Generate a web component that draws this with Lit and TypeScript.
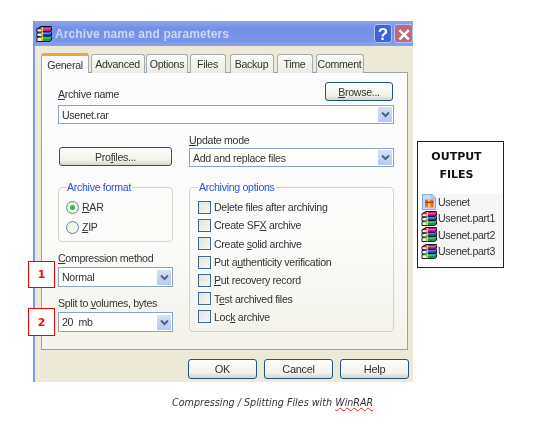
import { LitElement, html, css, svg } from "lit";
import { customElement } from "lit/decorators.js";

// stack of three books, used for the title bar and the volume list
const rarIcon = svg`
  <path d="M1 3 5 .5h10.5v4l-2 1.5H1z" fill="#c4177f" stroke="#111"/>
  <path d="M6 2.8h7.5l2-1.5" fill="none" stroke="#f070b8"/>
  <path d="M1 7 4 5.5h11.5v4l-2 1H1z" fill="#1f3fc4" stroke="#111"/>
  <path d="M6 7.3h7.5l2-1.5" fill="none" stroke="#6fa8f0"/>
  <path d="M1 11.5 4 10h11.5v4l-2 1.5H1z" fill="#0f9a55" stroke="#111"/>
  <path d="M6 12h7.5l2-1.5" fill="none" stroke="#60d898"/>
  <path d="M1.5 3.5h4v2h-4zM1.5 7.5h4v2.5h-4zM1.5 12h4v3h-4z" fill="#f4f0dc"/>
  <path d="M5.5 1h1.6v4.5H5.5zM5.5 5.8h1.6v4.4H5.5zM5.5 10.5h1.6v4.6H5.5z" fill="#e8c838"/>
`;

const sfxIcon = svg`
  <path d="M1.5 .5h9.5l3.5 3.5v11.5h-13z" fill="#c8dcf6" stroke="#88a8d8"/>
  <path d="M11 .5V4h3.5z" fill="#fff" stroke="#88a8d8"/>
  <rect x="4" y="5.5" width="8.5" height="8" fill="#e8742a"/>
  <rect x="7" y="5.5" width="2.4" height="8" fill="#f8d860"/>
  <rect x="4" y="7.5" width="8.5" height="1.6" fill="#c83020"/>
`;

const chevron = html`<span class="arrow"><svg width="9" height="7" viewBox="0 0 9 7"><path d="M1 1.5 4.5 5 8 1.5" fill="none" stroke="#4d6185" stroke-width="2"/></svg></span>`;

@customElement("app-root")
export class AppRoot extends LitElement {
  static styles = css`
    :host {
      display: block;
      width: 559px;
      height: 429px;
      overflow: hidden;
      background: #fff;
      font-family: "Liberation Sans", sans-serif;
      font-size: 10.6px;
      letter-spacing: -0.3px;
      color: #333;
    }
    * { box-sizing: border-box; }
    u { text-underline-offset: 1px; }

    .page {
      display: grid;
      grid-template-columns: 380px 87px;
      column-gap: 4px;
      padding: 21px 0 0 33px;
      filter: blur(0.35px);
    }

    .dialog {
      position: relative;
      height: 361px;
      background: #ece9d8;
      border-left: 2px solid #7f9ae6;
    }
    .titlebar {
      height: 25px;
      display: flex;
      align-items: center;
      gap: 3px;
      padding-left: 1px;
      background: linear-gradient(#8ba6ea, #7391e6 30%, #7b97e8 80%, #8ba3ea);
    }
    .titlebar svg { flex: none; }
    .title {
      flex: 1;
      font-weight: 700;
      font-size: 12px;
      letter-spacing: 0.1px;
      color: #c9d6f6;
    }
    .winbtn {
      width: 18px;
      height: 19px;
      border: 1px solid #b4c4f2;
      border-radius: 3px;
      display: grid;
      place-items: center;
      font-weight: 700;
      font-size: 17px;
      letter-spacing: 0;
      color: #fff;
    }
    .help { background: #3f62d8; }
    .close { background: #bc6a80; margin-left: -1px; width: 19px; }

    .body { padding: 7px 5px 0 6px; }
    .tabs {
      display: flex;
      height: 20px;
      position: relative;
      z-index: 1;
    }
    .tab {
      height: 19px;
      margin-top: 1px;
      border: 1px solid #a3acaf;
      border-bottom: 0;
      border-radius: 3px 3px 0 0;
      background: linear-gradient(#fbfbf8, #ecebe4);
      display: grid;
      place-items: center;
      color: #333;
    }
    .tab.active {
      height: 20px;
      margin-top: 0;
      border: 1px solid #a3acaf;
      border-top: 3px solid #f0a63c;
      border-bottom: 0;
      background: #fbfbfd;
    }
    .panel {
      height: 278px;
      margin-top: -1px;
      padding: 9px 13px 0 16px;
      border: 1px solid #98a3a8;
      background: linear-gradient(#fcfcfe, #fbfbfa 60%, #f3f2ea);
    }

    .name-head {
      display: flex;
      justify-content: space-between;
      align-items: flex-end;
      height: 19px;
    }
    .name-head label { line-height: 13px; }
    .btn {
      display: grid;
      place-items: center;
      height: 19px;
      border: 1px solid #1f5585;
      border-radius: 3px;
      background: linear-gradient(#fdfdfb, #f3f2ec 70%, #d8d4c8);
      color: #333;
    }
    .browse { width: 68px; margin-right: 1px; }
    .profiles { width: 113px; margin: 13px 0 0 1px; }

    .field {
      display: flex;
      align-items: center;
      justify-content: space-between;
      height: 19px;
      border: 1px solid #8aa5c0;
      background: #fff;
      padding: 0 1px 0 3px;
      color: #333;
    }
    .arrow {
      display: grid;
      place-items: center;
      width: 14px;
      height: 15px;
      background: linear-gradient(#d3e0f8, #b6c9f2);
    }
    .name-field { margin-top: 4px; }

    .columns {
      display: grid;
      grid-template-columns: 115px 205px;
      column-gap: 16px;
      margin-top: 10px;
    }
    .caption-label {
      display: block;
      line-height: 12px;
      height: 12px;
    }
    .update-label { margin-bottom: 2px; }
    .left { position: relative; }

    fieldset {
      margin: 0;
      min-width: 0;
      border: 1px solid #d6d3c6;
      border-radius: 4px;
      padding: 0;
    }
    legend {
      padding: 0 1px;
      line-height: 12px;
      color: #2552e6;
    }
    .format { margin-top: 15px; height: 61px; padding: 4px 0 0 7px; }
    .choice {
      display: flex;
      align-items: center;
      gap: 3px;
      height: 20px;
    }
    .radio {
      width: 13px;
      height: 13px;
      border: 1.5px solid #5d83a8;
      border-radius: 50%;
      background: #f4f4ee;
      display: grid;
      place-items: center;
    }
    .radio i {
      width: 5px;
      height: 5px;
      border-radius: 50%;
      background: #2ec23c;
    }
    .options { margin-top: 14px; height: 151px; padding: 5px 0 0 8px; }
    .option {
      display: flex;
      align-items: center;
      gap: 3px;
      height: 18.3px;
    }
    .check {
      width: 13px;
      height: 13px;
      border: 1px solid #3f6a90;
      background: linear-gradient(135deg, #e4e3da, #f8f8f4);
    }

    .compression { margin-top: 10px; }
    .combo { height: 20px; margin-top: 3px; }
    .split { margin-top: 10px; }

    .badge {
      position: absolute;
      left: -30px;
      width: 27px;
      height: 27px;
      border: 1.5px solid #f00000;
      background: #fff;
      display: grid;
      place-items: center;
      font-family: "DejaVu Sans", sans-serif;
      font-weight: 700;
      font-size: 11px;
      letter-spacing: 0;
      color: #f01010;
    }
    .badge-1 { top: 127px; }
    .badge-2 { top: 174px; height: 28px; }

    .actions {
      display: flex;
      justify-content: flex-end;
      gap: 7px;
      margin: 9px -1px 0 0;
    }
    .actions .btn { width: 69px; height: 20px; font-size: 11px; }

    .output {
      width: 87px;
      height: 127px;
      margin-top: 120px;
      border: 1px solid #222;
      padding: 6px 1px 0 3px;
    }
    .output h2 {
      margin: 0 0 10px;
      padding-right: 10px;
      font-family: "DejaVu Sans", sans-serif;
      font-weight: 700;
      font-size: 11px;
      letter-spacing: 0;
      line-height: 18px;
      text-align: center;
      color: #111;
    }
    .files { background: #f6f6f6; padding-bottom: 1px; }
    .file {
      display: flex;
      align-items: center;
      height: 16.3px;
      color: #333;
    }
    .file svg { flex: none; margin-right: 1px; }

    .caption {
      grid-column: 1 / -1;
      margin-top: 14px;
      padding-left: 139px;
      font-family: "DejaVu Sans", sans-serif;
      font-style: italic;
      font-size: 9.6px;
      letter-spacing: 0;
      line-height: 14px;
      color: #333;
    }
    .spell { text-decoration: underline wavy #e02020 0.7px; }
  `;

  tabs: [string, number, boolean?][] = [
    ["General", 48, true],
    ["Advanced", 54],
    ["Options", 42],
    ["Files", 36],
    ["Backup", 44],
    ["Time", 36],
    ["Comment", 48],
  ];

  options = [
    html`De<u>l</u>ete files after archiving`,
    html`Create SF<u>X</u> archive`,
    html`Create <u>s</u>olid archive`,
    html`Put a<u>u</u>thenticity verification`,
    html`<u>P</u>ut recovery record`,
    html`T<u>e</u>st archived files`,
    html`Loc<u>k</u> archive`,
  ];

  render() {
    return html`
      <div class="page">
        <section class="dialog">
          <header class="titlebar">
            <svg width="16" height="16" viewBox="0 0 16 16">${rarIcon}</svg>
            <span class="title">Archive name and parameters</span>
            <span class="winbtn help">?</span>
            <span class="winbtn close">✕</span>
          </header>
          <div class="body">
            <nav class="tabs">
              ${this.tabs.map(
                ([name, w, active], i) => html`<span
                  class="tab ${active ? "active" : ""}"
                  style="width:${w}px;margin-left:${i === 0 ? 0 : i === 4 ? 4 : i > 4 ? 3 : 1.5}px"
                  >${name}</span
                >`
              )}
            </nav>
            <div class="panel">
              <div class="name-head">
                <label><u>A</u>rchive name</label>
                <span class="btn browse"><span><u>B</u>rowse...</span></span>
              </div>
              <div class="field name-field">Usenet.rar ${chevron}</div>
              <div class="columns">
                <div class="left">
                  <span class="btn profiles"><span>Pro<u>f</u>iles...</span></span>
                  <fieldset class="format">
                    <legend>Archive format</legend>
                    <div class="choice"><span class="radio"><i></i></span><span><u>R</u>AR</span></div>
                    <div class="choice"><span class="radio"></span><span><u>Z</u>IP</span></div>
                  </fieldset>
                  <label class="caption-label compression"><u>C</u>ompression method</label>
                  <div class="field combo">Normal ${chevron}</div>
                  <label class="caption-label split">Split to <u>v</u>olumes, bytes</label>
                  <div class="field combo">20 &nbsp;mb ${chevron}</div>
                  <span class="badge badge-1">1</span>
                  <span class="badge badge-2">2</span>
                </div>
                <div>
                  <label class="caption-label update-label"><u>U</u>pdate mode</label>
                  <div class="field">Add and replace files ${chevron}</div>
                  <fieldset class="options">
                    <legend>Archiving options</legend>
                    ${this.options.map(
                      (o) => html`<div class="option"><span class="check"></span><span>${o}</span></div>`
                    )}
                  </fieldset>
                </div>
              </div>
            </div>
            <div class="actions">
              <span class="btn">OK</span>
              <span class="btn">Cancel</span>
              <span class="btn">Help</span>
            </div>
          </div>
        </section>
        <aside class="output">
          <h2>OUTPUT<br />FILES</h2>
          <div class="files">
            <div class="file"><svg width="16" height="16" viewBox="0 0 16 16">${sfxIcon}</svg>Usenet</div>
            ${[1, 2, 3].map(
              (n) => html`<div class="file"><svg width="16" height="15" viewBox="0 0 16 16" preserveAspectRatio="none">${rarIcon}</svg>Usenet.part${n}</div>`
            )}
          </div>
        </aside>
        <p class="caption">Compressing / Splitting Files with <span class="spell">WinRAR</span></p>
      </div>
    `;
  }
}
